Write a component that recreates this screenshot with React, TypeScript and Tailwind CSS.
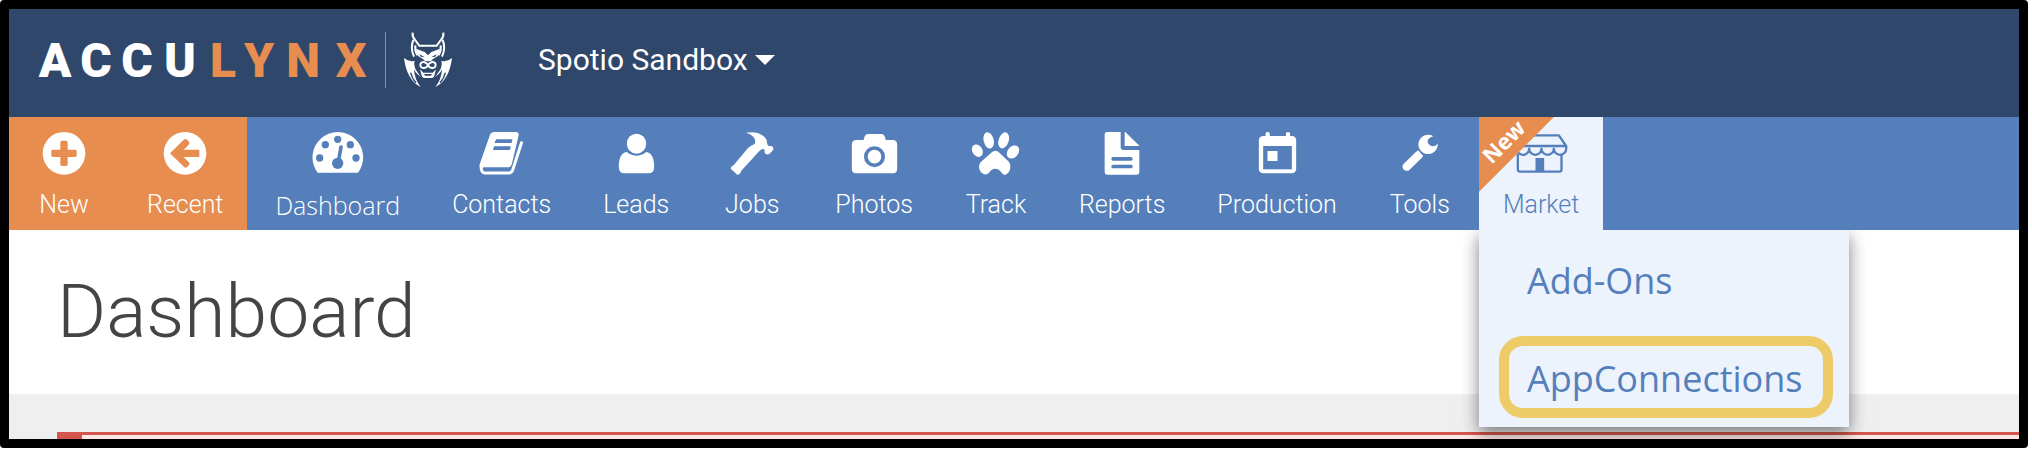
import type { ReactNode } from 'react';

type IconProps = { width: number; className: string; children: ReactNode };

const Icon = ({ width, className, children }: IconProps) => (
  <svg viewBox={`0 0 ${width} 132`} className={`h-11 ${className}`} fill="currentColor" aria-hidden="true">
    {children}
  </svg>
);

const NewIcon = () => (
  <Icon width={132} className="w-11">
    <circle cx="66" cy="64" r="64" />
    <g fill="#e68d4f">
      <rect x="55" y="26" width="22" height="76" rx="5" />
      <rect x="28" y="53" width="76" height="22" rx="5" />
    </g>
  </Icon>
);

const RecentIcon = () => (
  <Icon width={132} className="w-11">
    <circle cx="66" cy="64" r="64" />
    <path fill="#e68d4f" d="M21 64 L64 22 Q70 18 78 29 Q81 34 77 38 L62 53 H109 V75 H62 L77 90 Q81 94 78 99 Q70 110 64 106 Z" />
  </Icon>
);

const DashboardIcon = () => (
  <Icon width={156} className="w-[52px]">
    <path d="M17 122 A76 76 0 1 1 138 122 Z" />
    <g fill="#557fbb">
      <circle cx="23" cy="78" r="11" />
      <circle cx="40" cy="38" r="11" />
      <circle cx="77" cy="22" r="11" />
      <circle cx="115" cy="38" r="11" />
      <circle cx="132" cy="78" r="11" />
      <circle cx="77" cy="94" r="17" />
      <path d="M87 45 L79 90" stroke="#557fbb" strokeWidth="11" strokeLinecap="round" />
    </g>
  </Icon>
);

const ContactsIcon = () => (
  <Icon width={134} className="w-[45px]">
    <path d="M46 0 H110 Q121 0 118 12 L98 96 Q95 106 86 106 H14 Q8 108 10 116 L2 104 Q1 96 4 90 L32 10 Q36 0 46 0 Z" />
    <path
      d="M6 98 Q4 123 18 123 H88 Q98 123 101 113 L127 32"
      fill="none"
      stroke="currentColor"
      strokeWidth="9"
      strokeLinecap="round"
    />
    <path d="M51 22 H100 L97 33 H46 Z M45 43 H95 L92 54 H41 Z" fill="#557fbb" />
  </Icon>
);

const LeadsIcon = () => (
  <Icon width={116} className="w-[39px]">
    <path d="M29 60 C42 74 74 74 87 60 C105 63 111 80 111 104 Q111 124 93 124 H23 Q5 124 5 104 C5 80 11 63 29 60 Z" />
    <ellipse cx="58" cy="35" rx="31" ry="33" fill="none" stroke="#557fbb" strokeWidth="5" />
    <ellipse cx="58" cy="35" rx="29" ry="30" />
  </Icon>
);

const JobsIcon = () => (
  <Icon width={132} className="w-11">
    <path d="M48 2 C74 -3 100 4 110 24 C111 33 111 38 116 42 L124 42 Q131 44 130 53 L118 66 Q108 70 104 62 L103 52 Q96 48 86 59 L34 116 Q30 128 22 128 L2 110 Q2 104 12 98 L54 48 Q62 40 74 36 C80 20 68 8 48 2 Z" />
  </Icon>
);

const PhotosIcon = () => (
  <Icon width={140} className="w-[47px]">
    <path d="M16 24 H37 L41 12 Q44 6 51 6 H91 Q97 6 100 12 L104 24 H124 Q138 24 138 38 V110 Q138 124 124 124 H16 Q2 124 2 110 V38 Q2 24 16 24 Z" />
    <circle cx="70" cy="74" r="26" fill="none" stroke="#557fbb" strokeWidth="11" />
  </Icon>
);

const TrackIcon = () => (
  <Icon width={147} className="w-[49px]">
    <ellipse cx="19" cy="56" rx="15" ry="20" transform="rotate(-32 19 56)" />
    <ellipse cx="53" cy="25" rx="15" ry="25" transform="rotate(-14 53 25)" />
    <ellipse cx="98" cy="25" rx="15" ry="25" transform="rotate(18 98 25)" />
    <ellipse cx="126" cy="60" rx="16" ry="22" transform="rotate(40 126 60)" />
    <path d="M73 56 Q80 56 86 63 L112 88 Q120 96 118 106 Q117 122 104 128 Q96 130 92 122 Q84 110 73 110 Q62 110 54 122 Q46 130 38 126 Q24 120 24 102 Q24 94 32 88 L60 63 Q67 56 73 56 Z" />
  </Icon>
);

const ReportsIcon = () => (
  <Icon width={108} className="w-9">
    <path d="M9 0 H50 V46 Q50 54 58 54 H106 V121 Q106 128 99 128 H9 Q2 128 2 121 V7 Q2 0 9 0 Z M62 0 H64 L106 41 V42 H62 Z" />
    <g fill="#557fbb">
      <rect x="22" y="75" width="64" height="11" rx="5" />
      <rect x="22" y="98" width="64" height="11" rx="5" />
    </g>
  </Icon>
);

const ProductionIcon = () => (
  <Icon width={116} className="w-[39px]">
    <rect x="2" y="12" width="112" height="112" rx="13" />
    <rect x="22" y="0" width="13" height="26" rx="6" />
    <rect x="83" y="0" width="13" height="26" rx="6" />
    <rect x="15" y="42" width="86" height="70" fill="#557fbb" />
    <rect x="28" y="57" width="30" height="30" />
  </Icon>
);

const ToolsIcon = () => (
  <Icon width={114} className="w-[38px]">
    <path d="M17 104 L54 68" stroke="currentColor" strokeWidth="25" strokeLinecap="round" />
    <circle cx="83" cy="41" r="33" fill="#557fbb" />
    <path d="M97 13 A29 29 0 1 0 110 35 Q101 45 91 42 Q78 36 80 26 Q83 17 97 13 Z" />
  </Icon>
);

const MarketIcon = () => (
  <Icon width={158} className="w-[53px]">
    <g fill="none" stroke="currentColor" strokeWidth="7" strokeLinejoin="round">
      <path d="M5 42 L26 10 H131 L153 42 Z" />
      <path d="M5 42 V50 A18 18 0 0 0 42 50 A18 18 0 0 0 79 50 A18 18 0 0 0 116 50 A18 18 0 0 0 153 50 V42" />
      <path d="M8 66 V112 Q8 119 15 119 H133 Q139 119 139 112 V66" />
    </g>
    <rect x="61" y="78" width="26" height="40" />
  </Icon>
);

const Wordmark = () => (
  <svg viewBox="0 0 336 64" className="h-16 w-[336px]" aria-label="AccuLynx">
    <g fontFamily="Roboto, sans-serif" fontWeight="900" fontSize="48" textAnchor="middle">
      <text y="49" x="18 59 100 143" fill="#fff">ACCU</text>
      <text y="49" x="186 222 266 314" fill="#e68d4f">LYNX</text>
    </g>
  </svg>
);

const LynxLogo = () => (
  <svg viewBox="0 0 144 168" className="h-14 w-12" fill="#fff" aria-hidden="true">
    <g fill="none" stroke="#fff" strokeWidth="6">
      <path d="M26 2 Q24 14 33 24 L46 41 H98 L111 24 Q120 14 118 2" />
      <path d="M28 24 Q18 48 30 74 M116 24 Q126 48 114 74" />
      <path d="M34 40 Q32 56 40 70 M110 40 Q112 56 104 70" />
      <path d="M72 98 Q58 84 50 94 Q46 106 58 108 Q70 108 72 98 Q74 108 86 108 Q98 106 94 94 Q86 84 72 98" />
    </g>
    <path d="M36 50 L62 60 L72 70 L82 60 L108 50 L102 72 L88 80 L80 88 H64 L56 80 L42 72 Z" />
    <path d="M46 66 L62 76 L50 74 Z M98 66 L82 76 L94 74 Z" fill="#2f476b" />
    <path d="M48 112 L58 122 H86 L96 112 L90 134 L84 138 H60 L54 134 Z" />
    <path d="M60 126 H84 L81 131 H63 Z" fill="#2f476b" />
    <path d="M0 78 Q16 92 32 86 Q28 98 36 114 L50 134 Q38 128 30 112 Q32 144 50 165 Q8 144 0 78 Z" />
    <path d="M144 78 Q128 92 112 86 Q116 98 108 114 L94 134 Q106 128 114 112 Q112 144 94 165 Q136 144 144 78 Z" />
    <path
      d="M20 122 Q24 140 36 152 M124 122 Q120 140 108 152"
      fill="none"
      stroke="#2f476b"
      strokeWidth="4"
    />
  </svg>
);

const navItems = [
  { label: 'Contacts', icon: <ContactsIcon /> },
  { label: 'Leads', icon: <LeadsIcon /> },
  { label: 'Jobs', icon: <JobsIcon /> },
  { label: 'Photos', icon: <PhotosIcon /> },
  { label: 'Track', icon: <TrackIcon /> },
  { label: 'Reports', icon: <ReportsIcon /> },
  { label: 'Production', icon: <ProductionIcon /> },
  { label: 'Tools', icon: <ToolsIcon /> },
];

const itemClass = 'flex min-w-[110px] flex-col items-center gap-[13px] px-6 pt-[15px] pb-[9px] text-[25px] leading-8 font-light';

const Header = () => (
  <header className="flex h-[108px] items-center bg-[#2f476b] pb-[7px] pl-7">
    <a href="#" className="flex items-center">
      <Wordmark />
      <span className="ml-3 h-14 w-px bg-[#8391a6]"></span>
      <span className="ml-[18px]">
        <LynxLogo />
      </span>
    </a>
    <button className="ml-[86px] flex items-center gap-[7px] text-[30px] leading-9 text-white">
      Spotio Sandbox
      <svg viewBox="0 0 20 10" className="h-[10px] w-5" fill="currentColor" aria-hidden="true">
        <path d="M0 0 H20 L10 10 Z" />
      </svg>
    </button>
  </header>
);

const MarketMenu = () => (
  <div className="absolute top-full left-0 z-10 flex w-[370px] flex-col bg-[#ecf3fd] pb-px font-['Open_Sans',sans-serif] text-4xl text-[#557fbb] shadow-[0_6px_16px_rgba(0,0,0,0.5)] [clip-path:inset(0_-30px_-40px_-30px)]">
    <a href="#" className="flex h-[98px] items-center px-12 pt-1">Add-Ons</a>
    <a href="#" className="mt-2 mr-4 mb-2 ml-5 flex h-[82px] items-center rounded-3xl border-10 border-[#edcc68] px-[18px] pt-1">
      AppConnections
    </a>
  </div>
);

const Nav = () => (
  <nav className="flex gap-1 bg-[#557fbb] text-white">
    <div className="flex gap-1 bg-[#e68d4f]">
      <button className={itemClass}>
        <NewIcon />
        New
      </button>
      <button className={itemClass}>
        <RecentIcon />
        Recent
      </button>
    </div>
    <a href="#" className={`${itemClass} font-['Open_Sans',sans-serif]`}>
      <DashboardIcon />
      Dashboard
    </a>
    {navItems.map((item) => (
      <a key={item.label} href="#" className={itemClass}>
        {item.icon}
        {item.label}
      </a>
    ))}
    <div className="relative bg-[#ecf3fd] text-[#557fbb]">
      <a href="#" className={itemClass}>
        <MarketIcon />
        Market
      </a>
      {/* Corner ribbon */}
      <div className="pointer-events-none absolute top-0 left-0 size-[75px] bg-[#e68d4f] [clip-path:polygon(0_0,100%_0,0_100%)]">
        <span className="flex size-12 -rotate-45 items-center justify-center font-['Open_Sans',sans-serif] text-[22px] leading-6 font-bold text-white">
          New
        </span>
      </div>
      <MarketMenu />
    </div>
  </nav>
);

const App = () => {
  return (
    <div className="mr-1 overflow-hidden rounded-sm border-[9px] border-black bg-white font-['Roboto',sans-serif]">
      <Header />
      <Nav />
      <main>
        <div className="flex h-[164px] items-center px-12 pb-[3px]">
          <h1 className="text-[75px] leading-[84px] font-light text-[#444]">Dashboard</h1>
        </div>
        <div className="bg-[#efefef] pt-[38px] pl-12">
          {/* Alert panel, cut off by the bottom of the frame */}
          <div className="h-[7px] border-t-[3px] border-l-[25px] border-[#d4564e] bg-[#fbe8e5]"></div>
        </div>
      </main>
    </div>
  );
};

export default App;
